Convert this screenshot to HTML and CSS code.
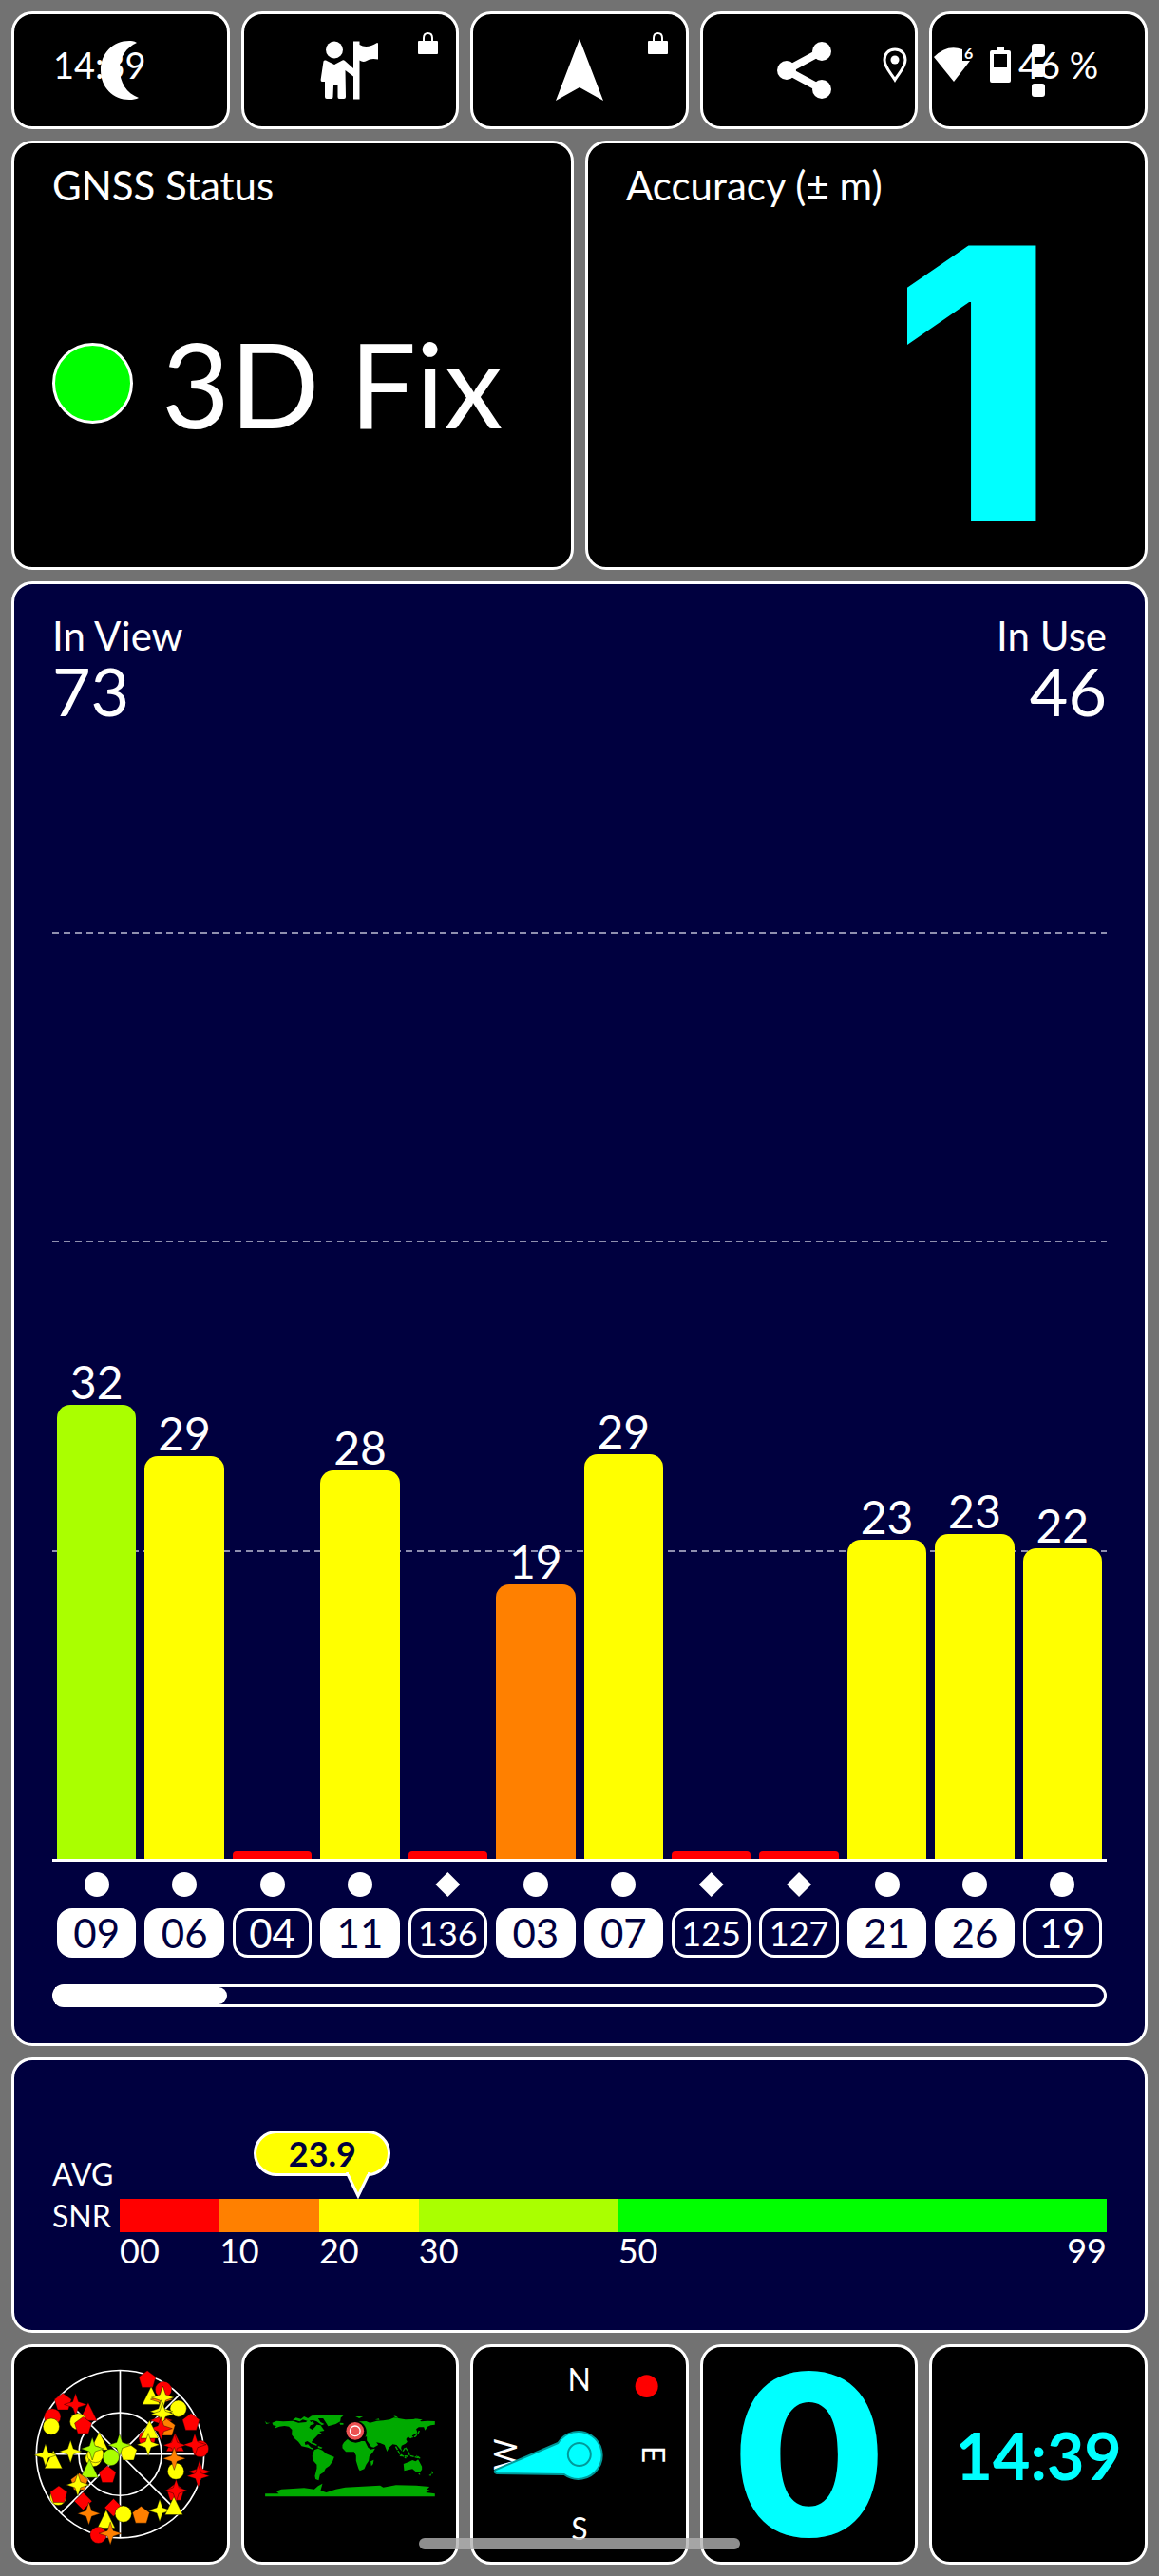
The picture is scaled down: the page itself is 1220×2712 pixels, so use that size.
FILE: index.html
```html
<!DOCTYPE html>
<html lang="en">
<head>
  <meta charset="UTF-8">
  <meta name="viewport" content="width=device-width, initial-scale=1.0">
  <title>GNSS Status</title>
  <link rel="stylesheet" href="styles.css">
</head>
<body>
  <!-- System status bar, drawn over the toolbar -->
  <div class="status-bar">
    <span class="status-time">14:39</span>
    <svg class="status-pin" width="26" height="36" viewBox="0 0 26 36">
      <path d="M13 2 C6 2 2 7 2 13 C2 21 9 27 13 34 C17 27 24 21 24 13 C24 7 20 2 13 2Z" fill="none" stroke="#fff" stroke-width="3"/>
      <circle cx="13" cy="13" r="4.5" fill="#fff"/>
    </svg>
    <svg class="status-wifi" width="42" height="36" viewBox="0 0 42 36">
      <path d="M0 10 Q14 -4 30 2 V14 H38 L21 36Z" fill="#fff"/>
      <text x="32" y="12" class="wifi-text">6</text>
    </svg>
    <svg class="status-battery" width="22" height="38" viewBox="0 0 22 38">
      <path d="M7 0 H15 V4 H20 Q22 4 22 6 V36 Q22 38 20 38 H2 Q0 38 0 36 V6 Q0 4 2 4 H7Z" fill="#fff"/>
      <rect x="4" y="8" width="14" height="14" fill="#000"/>
    </svg>
    <span class="status-level">46 %</span>
  </div>

  <div class="dashboard">
    <!-- Toolbar -->
    <div class="tile-row">
      <button type="button" class="tile" aria-label="Night mode">
        <svg class="tool-icon" viewBox="0 0 64 64"><path d="M49 3 C46 1 43 1 41 1 C24 1 11 14 11 32 C11 50 24 63 41 63 C45 63 48 62.5 51 61 C38 56 31 45 31 30 C31 18 38 8 49 3Z"/></svg>
      </button>
      <button type="button" class="tile" aria-label="Waypoint">
        <svg class="tool-icon" viewBox="0 0 64 64">
          <circle cx="16" cy="10.5" r="9"/>
          <path d="M4.5 22.5 Q5 21 7 21.5 L16 26 L24.5 21.5 Q26 21 27 22 L36 30 V1.5 H42.5 V5 Q50 10 61 3 Q62 3 62 4 V20.5 Q54 19 50 22 Q46 24 42.5 21.5 V62.5 H36 V38.5 L27.5 32 L28 60 Q28 62 26 62 H21 Q19.5 62 19.5 60 V48 H15 L14.5 60 Q14.5 62 13 62 H8 Q6 62 6 60 V44 H3 Q1.5 44 1.6 42Z"/>
        </svg>
        <svg class="lock" viewBox="0 0 21 23"><rect x="0" y="9" width="21" height="14" rx="1"/><path d="M6 10 V6 Q6 1 10.5 1 Q15 1 15 6 V10" fill="none" stroke="#fff" stroke-width="2"/></svg>
      </button>
      <button type="button" class="tile" aria-label="Navigate">
        <svg class="tool-icon" viewBox="0 0 64 64"><path d="M32 -1 L57 64 L32 50 L7 64Z"/></svg>
        <svg class="lock" viewBox="0 0 21 23"><rect x="0" y="9" width="21" height="14" rx="1"/><path d="M6 10 V6 Q6 1 10.5 1 Q15 1 15 6 V10" fill="none" stroke="#fff" stroke-width="2"/></svg>
      </button>
      <button type="button" class="tile" aria-label="Share">
        <svg class="tool-icon" viewBox="0 0 64 64">
          <path d="M45 12 L8 32 L45 52" fill="none" stroke="#fff" stroke-width="8"/>
          <circle cx="8" cy="32" r="10"/><circle cx="45" cy="12" r="10"/><circle cx="45" cy="52" r="10"/>
        </svg>
      </button>
      <button type="button" class="tile" aria-label="More">
        <svg class="tool-icon" viewBox="0 0 64 64">
          <rect x="25" y="4" width="14" height="14" rx="3"/><rect x="25" y="25" width="14" height="14" rx="3"/><rect x="25" y="46" width="14" height="14" rx="3"/>
        </svg>
      </button>
    </div>

    <!-- Fix and accuracy -->
    <div class="tile-row">
      <section class="tile card">
        <h2 class="card-title">GNSS Status</h2>
        <div class="fix"><span class="fix-dot"></span>3D Fix</div>
      </section>
      <section class="tile card">
        <h2 class="card-title">Accuracy (± m)</h2>
        <div class="accuracy">1</div>
      </section>
    </div>

    <!-- Satellite signal chart -->
    <section class="tile panel chart">
      <div class="plot">
        <div class="grid-lines"><i></i><i></i><i></i><i></i></div>
        <div class="counts">
          <div><h2 class="card-title">In View</h2><p>73</p></div>
          <div class="count-right"><h2 class="card-title">In Use</h2><p>46</p></div>
        </div>
        <div class="bars">
          <div class="col">32<span class="bar lime" style="height: 36.7%"></span></div>
          <div class="col">29<span class="bar yellow" style="height: 32.6%"></span></div>
          <div class="col"><span class="bar red" style="height: 0.6%"></span></div>
          <div class="col">28<span class="bar yellow" style="height: 31.4%"></span></div>
          <div class="col"><span class="bar red" style="height: 0.6%"></span></div>
          <div class="col">19<span class="bar orange" style="height: 22.2%"></span></div>
          <div class="col">29<span class="bar yellow" style="height: 32.7%"></span></div>
          <div class="col"><span class="bar red" style="height: 0.6%"></span></div>
          <div class="col"><span class="bar red" style="height: 0.6%"></span></div>
          <div class="col">23<span class="bar yellow" style="height: 25.8%"></span></div>
          <div class="col">23<span class="bar yellow" style="height: 26.3%"></span></div>
          <div class="col">22<span class="bar yellow" style="height: 25.1%"></span></div>
        </div>
      </div>
      <div class="sats">
        <div class="sat"><i class="dot"></i><span class="pill used">09</span></div>
        <div class="sat"><i class="dot"></i><span class="pill used">06</span></div>
        <div class="sat"><i class="dot"></i><span class="pill">04</span></div>
        <div class="sat"><i class="dot"></i><span class="pill used">11</span></div>
        <div class="sat"><i class="diamond"></i><span class="pill small">136</span></div>
        <div class="sat"><i class="dot"></i><span class="pill used">03</span></div>
        <div class="sat"><i class="dot"></i><span class="pill used">07</span></div>
        <div class="sat"><i class="diamond"></i><span class="pill small">125</span></div>
        <div class="sat"><i class="diamond"></i><span class="pill small">127</span></div>
        <div class="sat"><i class="dot"></i><span class="pill used">21</span></div>
        <div class="sat"><i class="dot"></i><span class="pill used">26</span></div>
        <div class="sat"><i class="dot"></i><span class="pill">19</span></div>
      </div>
      <div class="scroll-track"><div class="scroll-thumb" style="width: 16.4%"></div></div>
    </section>

    <!-- Average signal -->
    <section class="tile panel snr">
      <span class="snr-avg">AVG</span>
      <div class="snr-marker">
        <div class="callout" style="left: 24.1%">
          23.9
          <svg class="callout-tip" viewBox="0 0 26 28"><path d="M1 0 L13 25 L25 0" fill="#ff0" stroke="#fff" stroke-width="3"/><path d="M3 0 H23 V2 H3Z" fill="#ff0"/></svg>
        </div>
      </div>
      <span class="snr-name">SNR</span>
      <div class="scale">
        <i class="red"></i><i class="orange"></i><i class="yellow"></i><i class="lime"></i><i class="green"></i>
      </div>
      <div class="scale-labels">
        <span>00</span><span>10</span><span>20</span><span>30</span><span class="last">50<b>99</b></span>
      </div>
    </section>

    <!-- Page buttons -->
    <div class="tile-row">
      <button type="button" class="tile" aria-label="Sky view">
        <svg class="gauge" viewBox="46 33 672 678">
          <defs>
            <path id="star" d="M0 -36 L9 -9 L36 0 L9 9 L0 36 L-9 9 L-36 0 L-9 -9Z"/>
            <path id="pent" d="M0 -28 L27 -8 L17 25 H-17 L-27 -8Z"/>
            <path id="tri" d="M0 -32 L28 25 H-28Z"/>
            <path id="dia" d="M0 -28 L28 0 L0 28 L-28 0Z"/>
            <circle id="disc" r="26"/>
          </defs>
          <g fill="none" stroke="#fff" stroke-width="5">
            <circle cx="381" cy="371" r="265"/><circle cx="381" cy="371" r="131"/>
            <path d="M381 106 V636 M116 371 H646 M568 184 L194 558 M194 184 L568 558"/>
          </g>
          <g class="sky">
            <g class="f-red">
              <use href="#pent" x="467" y="135"/><use href="#disc" x="518" y="167"/><use href="#pent" x="200" y="206"/>
              <use href="#tri" x="280" y="240"/><use href="#star" x="240" y="214"/><use href="#disc" x="167" y="253"/>
              <use href="#pent" x="605" y="270"/><use href="#disc" x="466" y="322"/><use href="#star" x="511" y="264"/>
            </g>
            <g class="f-yellow"><use href="#disc" x="248" y="268"/><use href="#disc" x="163" y="284"/><use href="#disc" x="565" y="227"/><use href="#tri" x="479" y="189"/></g>
            <use class="f-orange" href="#star" x="513" y="198"/>
            <use class="f-yellow" href="#star" x="516" y="192"/>
            <use class="f-yellow" href="#star" x="511" y="236"/><use class="f-yellow" href="#star" x="515" y="244"/>
            <use class="f-orange" href="#pent" x="528" y="287"/>
            <use class="f-red" href="#star" x="510" y="290"/><use class="f-red" href="#pent" x="264" y="281"/>
            <use class="f-yellow" href="#tri" x="474" y="296"/><use class="f-yellow" href="#star" x="470" y="341"/>
            <g class="f-red">
              <use href="#tri" x="555" y="337"/><use href="#star" x="553" y="343"/><use href="#disc" x="635" y="354"/>
              <use href="#star" x="617" y="341"/><use href="#star" x="632" y="427"/><use href="#star" x="628" y="440"/>
              <use href="#pent" x="341" y="436"/><use href="#pent" x="556" y="492"/><use href="#star" x="558" y="486"/>
            </g>
            <use class="f-yellow" href="#disc" x="297" y="384"/><use class="f-yellow" href="#tri" x="315" y="333"/>
            <use class="f-yellow" href="#disc" x="303" y="372"/><use class="f-yellow" href="#pent" x="407" y="365"/>
            <use class="f-lime" href="#star" x="293" y="354"/><use class="f-lime" href="#star" x="379" y="343"/>
            <use class="f-lime" href="#disc" x="352" y="381"/><use class="f-lime" href="#tri" x="284" y="420"/>
            <use class="f-yellow" href="#tri" x="170" y="391"/><use class="f-yellow" href="#star" x="145" y="374"/>
            <use class="f-yellow" href="#star" x="224" y="363"/><use class="f-yellow" href="#disc" x="557" y="425"/>
            <use class="f-orange" href="#star" x="552" y="385"/><use class="f-orange" href="#pent" x="252" y="459"/>
            <use class="f-yellow" href="#star" x="247" y="468"/><use class="f-yellow" href="#disc" x="185" y="507"/>
            <use class="f-red" href="#pent" x="187" y="499"/><use class="f-red" href="#dia" x="264" y="520"/>
            <use class="f-red" href="#dia" x="360" y="540"/><use class="f-yellow" href="#disc" x="391" y="560"/>
            <use class="f-orange" href="#star" x="282" y="559"/><use class="f-yellow" href="#tri" x="337" y="580"/>
            <use class="f-orange" href="#pent" x="447" y="564"/><use class="f-yellow" href="#star" x="506" y="549"/>
            <use class="f-yellow" href="#tri" x="551" y="538"/><use class="f-red" href="#disc" x="312" y="627"/>
            <use class="f-orange" href="#star" x="350" y="622"/>
          </g>
        </svg>
      </button>
      <button type="button" class="tile" aria-label="World map">
        <svg class="gauge" viewBox="52 33 668 678">
          <g fill="#0a0">
            <path d="M139 272 L153 266 L174 268 L205 266 L222 272 L246 270 L254 262 L262 270 L268 266 L272 276 L260 280 L256 288 L266 294 L274 286 L280 278 L292 280 L304 297 L288 300 L296 306 L284 310 L268 326 L264 332 L266 340 L260 336 L250 330 L242 334 L244 342 L252 340 L256 344 L262 350 L270 352 L266 356 L252 350 L232 346 L222 332 L210 322 L201 310 L202 294 L192 284 L178 282 L162 284 L146 290 L152 282 L142 280Z"/>
            <path d="M117 266 L122 272 L133 272 L120 276Z M204 264 L214 256 L230 260 L240 252 L252 258 L264 250 L340 246 L364 250 L356 256 L354 268 L340 276 L316 283 L308 270 L300 258 L284 258 L292 270 L304 276 L296 280 L280 268 L268 264 L250 266 L236 262 L226 268 L214 264Z M352 272 L364 273 L364 278 L354 278Z"/>
            <path d="M256 334 L272 336 L282 342 L278 344 L264 338Z M284 345 L298 350 L294 354 L284 351Z"/>
            <path d="M272 358 L284 353 L298 359 L310 370 L335 380 L330 394 L320 408 L308 416 L302 428 L290 436 L286 454 L276 450 L274 440 L280 416 L280 404 L267 390 L266 376Z"/>
            <path d="M366 334 L376 325 L396 322 L420 330 L432 330 L442 350 L450 356 L464 353 L458 364 L446 378 L444 392 L436 404 L430 418 L416 424 L412 418 L404 392 L404 376 L398 364 L372 364 L361 352 L361 342Z M450 394 L460 389 L458 402 L452 409Z"/>
            <path d="M384 318 L384 304 L402 290 L398 278 L416 268 L436 267 L448 272 L470 266 L490 265 L510 262 L524 256 L560 262 L600 260 L610 268 L630 266 L653 267 L653 278 L640 280 L630 284 L622 296 L618 286 L602 286 L594 292 L598 304 L582 312 L578 322 L568 316 L562 324 L566 332 L560 338 L548 344 L546 352 L550 362 L542 354 L532 342 L520 340 L508 350 L502 363 L494 342 L480 336 L468 334 L474 342 L460 350 L452 348 L438 328 L438 316 L420 318 L412 308 L404 316Z"/>
            <path d="M402 252 H426 L414 258Z M464 262 L476 259 L478 263Z M523 250 L532 252 L538 257 L528 256Z M586 259 L614 262 L604 266Z"/>
            <path d="M554 402 L570 396 L582 390 L592 394 L600 388 L612 410 L612 420 L604 430 L592 426 L582 418 L556 424Z M642 424 L648 430 L644 436Z M634 438 L642 433 L640 440Z M600 432 H606 V438Z"/>
            <path d="M117 496 H160 L152 488 L168 482 L240 478 L272 482 L284 472 L298 464 L292 486 L310 492 L340 482 L370 476 L480 470 L490 476 L530 469 L594 470 L636 474 L628 482 L638 486 L624 492 L653 496 V505 H117Z"/>
          </g>
          <path d="M529 347 L542 370 L562 384 M542 376 L568 378 M552 362 L560 350 L568 362 L574 376 L606 384 L594 376 M572 318 L590 316 L600 306 L604 296" fill="none" stroke="#0a0" stroke-width="4" stroke-dasharray="12 3"/>
          <circle cx="403" cy="301" r="34" fill="#000"/>
          <circle cx="401" cy="298" r="28" fill="#eb5252"/>
          <circle cx="401" cy="298" r="16" fill="none" stroke="#fff" stroke-width="4"/>
        </svg>
      </button>
      <button type="button" class="tile" aria-label="Compass">
        <svg class="gauge compass" viewBox="0 0 224 226">
          <text x="112" y="46">N</text>
          <text x="112" y="203">S</text>
          <text transform="translate(178 113) rotate(90)">E</text>
          <text transform="translate(46 113) rotate(-90)">W</text>
          <circle cx="183" cy="41" r="12" fill="#f00"/>
          <path d="M89.5 101 L24 129 Q21 132 25 133 L96 134 A25 25 0 1 0 89.5 101Z" fill="#0ff" stroke="#009a9a" stroke-width="2"/>
          <circle cx="112" cy="113" r="12" fill="none" stroke="#009a9a" stroke-width="2"/>
        </svg>
      </button>
      <button type="button" class="tile speed" aria-label="Speed">0</button>
      <button type="button" class="tile clock" aria-label="Clock">14:39</button>
    </div>
  </div>

  <div class="home-bar"></div>
</body>
</html>
```
FILE: styles.css
```css
* {
  box-sizing: border-box;
}
body {
  margin: 0;
  background-color: #727272;
  color: #fff;
  font-family: Lato, sans-serif;
  position: relative;
}
h2, p {
  margin: 0;
  font-weight: 400;
}
.dashboard {
  display: grid;
  grid-template-columns: minmax(0, 1fr);
  grid-template-rows: 124px 452px 1fr 290px 232px;
  gap: 12px;
  padding: 12px;
  min-height: 100vh;
}
.tile-row {
  display: flex;
  gap: 12px;
}
.tile {
  background-color: #000;
  border: 3px solid #fff;
  border-radius: 22px;
}
.tile-row .tile {
  flex: 1 1 0;
  min-width: 0;
  position: relative;
}
button.tile {
  display: flex;
  align-items: center;
  justify-content: center;
  padding: 0;
  color: #0ff;
  font-family: Lato, sans-serif;
  cursor: pointer;
}
.panel {
  background-color: #00003f;
}

/* Toolbar */
.tool-icon {
  width: 64px;
  height: 64px;
  fill: #fff;
  overflow: visible;
}
.lock {
  position: absolute;
  top: 19px;
  right: 19px;
  width: 21px;
  height: 23px;
  fill: #fff;
}

/* Status bar */
.status-bar {
  position: absolute;
  z-index: 2;
  top: 0;
  left: 0;
  right: 0;
  height: 136px;
  padding: 0 56px;
  display: flex;
  align-items: center;
  font-size: 38px;
  pointer-events: none;
}
.status-bar svg {
  overflow: visible;
}
.status-time {
  margin-right: auto;
}
.status-pin {
  margin-right: 28px;
}
.status-wifi {
  margin-right: 17px;
}
.status-battery {
  margin-right: 8px;
}
.status-level {
  width: 92px;
}
.wifi-text {
  font-size: 16px;
  font-weight: 700;
  fill: #fff;
}

/* Cards */
.card {
  display: flex;
  flex-direction: column;
  padding: 30px 40px 0;
}
.card-title {
  font-size: 42px;
  line-height: 28px;
}
.fix {
  flex: 1;
  display: flex;
  align-items: center;
  gap: 30px;
  font-size: 124px;
  line-height: 124px;
}
.fix-dot {
  width: 85px;
  height: 85px;
  border: 3px solid #fff;
  border-radius: 50%;
  background-color: #0f0;
}
.accuracy {
  flex: 1;
  display: flex;
  align-items: center;
  justify-content: flex-end;
  padding-right: 52px;
  color: #0ff;
  font-family: Inter, sans-serif;
  font-size: 398px;
  font-weight: 800;
  line-height: 360px;
}

/* Chart */
.chart {
  display: flex;
  flex-direction: column;
  padding: 40px 40px 38px;
}
.plot {
  flex: 1;
  display: grid;
  border-bottom: 3px solid #fff;
}
.grid-lines, .counts, .bars {
  grid-area: 1 / 1;
}
.grid-lines {
  display: grid;
  grid-template-rows: repeat(4, 1fr);
}
.grid-lines i + i {
  background: repeating-linear-gradient(90deg, #8f8faf 0 7px, transparent 7px 12px) top / 100% 2px no-repeat;
}
.counts {
  display: flex;
  justify-content: space-between;
}
.counts p {
  margin-top: 10px;
  font-size: 70px;
  line-height: 68px;
}
.count-right {
  text-align: right;
}
.bars, .sats {
  display: flex;
  gap: 9px;
  padding: 0 5px;
}
.col {
  flex: 1 1 0;
  min-width: 0;
  display: flex;
  flex-direction: column;
  justify-content: flex-end;
  text-align: center;
  font-size: 48px;
  line-height: 48px;
}
.bar {
  flex: none;
  border-radius: 14px 14px 0 0;
}
.bar.red {
  border-radius: 4px 4px 0 0;
}
.red {
  background-color: #f00;
}
.orange {
  background-color: #ff8000;
}
.yellow {
  background-color: #ff0;
}
.lime {
  background-color: #af0;
}
.green {
  background-color: #0f0;
}
.sat {
  flex: 1 1 0;
  min-width: 0;
  display: flex;
  flex-direction: column;
  align-items: center;
  gap: 12px;
  padding-top: 11px;
}
.dot, .diamond {
  width: 26px;
  height: 26px;
  background-color: #fff;
}
.dot {
  border-radius: 50%;
}
.diamond {
  clip-path: polygon(50% 0, 100% 50%, 50% 100%, 0 50%);
}
.pill {
  width: 100%;
  height: 52px;
  border: 3px solid #fff;
  border-radius: 16px;
  text-align: center;
  font-size: 42px;
  line-height: 46px;
}
.pill.small {
  font-size: 36px;
}
.pill.used {
  background-color: #fff;
  color: #00003f;
}
.scroll-track {
  height: 24px;
  margin-top: 28px;
  border: 3px solid #fff;
  border-radius: 12px;
}
.scroll-thumb {
  height: 100%;
  background-color: #fff;
  border-radius: 0 9px 9px 0;
}

/* Average SNR */
.snr {
  display: grid;
  grid-template-columns: 71px 1fr;
  grid-template-rows: 72px 35px auto;
  padding: 74px 40px 0;
  font-size: 32px;
  line-height: 32px;
}
.snr-avg {
  align-self: end;
  padding-bottom: 10px;
}
.snr-name {
  align-self: center;
}
.snr-marker {
  position: relative;
}
.callout {
  position: absolute;
  top: 0;
  width: 144px;
  height: 48px;
  margin-left: -109px;
  border: 3px solid #fff;
  border-radius: 24px;
  background-color: #ff0;
  color: #00003f;
  font-size: 36px;
  font-weight: 700;
  line-height: 42px;
  text-align: center;
}
.callout-tip {
  position: absolute;
  top: 41px;
  right: 18px;
  width: 26px;
  height: 28px;
}
.scale, .scale-labels {
  display: grid;
  grid-template-columns: 10fr 10fr 10fr 20fr 49fr;
}
.scale-labels {
  grid-column: 2;
  font-size: 36px;
  line-height: 38px;
}
.last {
  display: flex;
  justify-content: space-between;
}
.last b {
  font-weight: 400;
}

/* Page buttons */
.gauge {
  width: 100%;
  height: 100%;
}
.sky {
  stroke: rgba(0, 0, 0, 0.4);
  stroke-width: 3;
}
.f-red {
  fill: #f00;
}
.f-orange {
  fill: #ff8000;
}
.f-yellow {
  fill: #ff0;
}
.f-lime {
  fill: #af0;
}
.compass text {
  fill: #fff;
  font-size: 32px;
  text-anchor: middle;
}
button.speed {
  font-family: Inter, sans-serif;
  font-size: 236px;
  font-weight: 800;
  line-height: 200px;
}
button.clock {
  font-size: 68px;
  font-weight: 700;
}
.home-bar {
  position: absolute;
  z-index: 2;
  bottom: 28px;
  left: 50%;
  width: 338px;
  height: 12px;
  margin-left: -169px;
  border-radius: 6px;
  background-color: rgba(177, 177, 177, 0.8);
}
```
